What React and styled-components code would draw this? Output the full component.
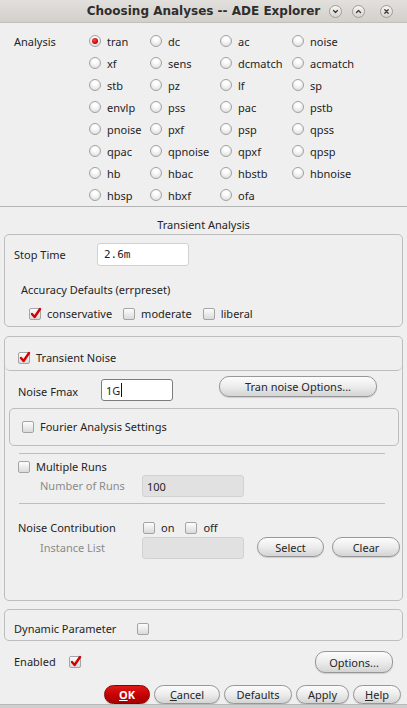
import React from 'react';
import styled, { createGlobalStyle } from 'styled-components';

const Global = createGlobalStyle`
    body {
        margin: 0;
        background: #efefef;
        font-family: "Noto Sans", "Open Sans", sans-serif;
        font-size: 11px;
        color: #242424;
    }
`;

const Window = styled.div`
    width: 407px;
    height: 708px;
    display: flex;
    flex-direction: column;
    background: #efefef;
    overflow: hidden;
`;

const TitleBar = styled.div`
    height: 22px;
    flex: none;
    display: grid;
    grid-template-columns: 1fr auto 1fr;
    align-items: center;
    background: linear-gradient(#e2e0dc, #d3d0cb);
    border-bottom: 1px solid #c2bfba;

    .title {
        grid-column: 2;
        font-family: "DejaVu Sans", sans-serif;
        font-weight: bold;
        font-size: 12px;
        color: #2e2e2e;
    }

    .controls {
        display: flex;
        justify-content: flex-end;
        align-items: center;
        padding-right: 14px;
        gap: 10px;
    }
`;

const TitleButton = styled.span`
    width: 11px;
    height: 11px;
    border-radius: 50%;
    border: 1px solid #a09d98;
    background: linear-gradient(#f7f6f4, #d7d4cf);
    display: flex;
    align-items: center;
    justify-content: center;
    margin-left: ${(p) => (p.$gap ? '5px' : '0')};
`;

const AnalysisGrid = styled.div`
    display: grid;
    grid-template-columns: 75px 61px 70px 72px 1fr;
    grid-auto-rows: 22px;
    padding: 7px 0 0 14px;
    border-bottom: 1px solid #b4b4b4;
    height: 176px;
    flex: none;

    .label {
        grid-row: 1;
        grid-column: 1;
        display: flex;
        align-items: center;
    }
`;

const RadioItem = styled.label`
    display: flex;
    align-items: center;
    gap: 6px;
`;

const Radio = styled.span`
    width: 10px;
    height: 10px;
    border-radius: 50%;
    border: 1px solid #a2a2a2;
    background: radial-gradient(circle at 50% 30%, #ffffff 20%, #dcdcdc 90%);
    display: flex;
    align-items: center;
    justify-content: center;

    &::after {
        content: '';
        display: ${(p) => (p.$on ? 'block' : 'none')};
        width: 6px;
        height: 6px;
        border-radius: 50%;
        background: radial-gradient(circle at 40% 35%, #ff4a4a, #c00000 70%);
    }
`;

const SectionTitle = styled.div`
    text-align: center;
    line-height: 16px;
    padding-top: 10px;
    margin-bottom: 1px;
`;

const GroupBox = styled.div`
    margin: ${(p) => p.$margin || '0 4px'};
    border: 1px solid #bdbdbd;
    border-radius: 5px;
    padding: ${(p) => p.$pad || '0'};
    flex: none;
`;

const Row = styled.div`
    display: flex;
    flex: none;
    align-items: ${(p) => p.$align || 'center'};
    padding-left: ${(p) => p.$left || 0}px;
    margin-top: ${(p) => p.$top || 0}px;
    min-height: ${(p) => p.$h || 16}px;
`;

const Label = styled.span`
    width: ${(p) => (p.$w ? `${p.$w}px` : 'auto')};
    flex: none;
    line-height: 16px;
    color: ${(p) => (p.$muted ? '#8a8a8a' : '#242424')};
    margin-top: ${(p) => p.$top || 0}px;
`;

const TextField = styled.div`
    width: ${(p) => p.$w}px;
    height: ${(p) => p.$h || 22}px;
    box-sizing: border-box;
    border: 1px solid ${(p) => (p.$focus ? '#7c7c7c' : '#d2d2d2')};
    border-radius: 3px;
    background: ${(p) => (p.$disabled ? '#e1e1e1' : '#ffffff')};
    display: flex;
    align-items: center;
    padding-left: ${(p) => (p.$mono ? 6 : 4)}px;
    font-family: ${(p) => (p.$mono ? '"DejaVu Sans Mono", monospace' : 'inherit')};
    font-size: 11px;
    margin-top: ${(p) => p.$top || 0}px;
    flex: none;

    .caret {
        display: inline-block;
        width: 1px;
        height: 14px;
        background: #111;
        margin-left: 1px;
    }
`;

const CheckItem = styled.label`
    display: flex;
    align-items: center;
    gap: 6px;
    margin-right: ${(p) => p.$mr || 0}px;
    line-height: 16px;
`;

const Box = styled.span`
    width: 10px;
    height: 10px;
    flex: none;
    border: 1px solid #a4a4a4;
    border-radius: 2px;
    background: linear-gradient(#fdfdfd, #dadada);
    position: relative;

    svg {
        position: absolute;
        left: 0;
        top: -2px;
    }
`;

const Check = ({ on }) => (
    <Box>
        {on && (
            <svg width="12" height="12" viewBox="0 0 12 12">
                <path d="M2 7 L4.6 10 L10 2" fill="none" stroke="#d20000" strokeWidth="2.4" strokeLinecap="round" strokeLinejoin="round" />
            </svg>
        )}
    </Box>
);

const PillButton = styled.button`
    height: ${(p) => p.$h || 21}px;
    width: ${(p) => p.$w}px;
    flex: none;
    border-radius: 10px;
    border: 1px solid ${(p) => (p.$primary ? '#8a0000' : '#979797')};
    background: ${(p) =>
        p.$primary
            ? 'linear-gradient(#e01818, #c40000 55%, #a60000)'
            : 'linear-gradient(#fcfcfc, #ececec 50%, #d4d4d4)'};
    color: ${(p) => (p.$primary ? '#ffffff' : '#262626')};
    font-family: "Noto Sans", sans-serif;
    font-size: 11px;
    font-weight: ${(p) => (p.$primary ? 'bold' : 'normal')};
    padding: 0;
    margin-top: ${(p) => p.$top || 0}px;
    margin-left: ${(p) => p.$ml || '0'};
    margin-right: ${(p) => p.$mr || '0'};
    box-shadow: 0 1px 1px rgba(0, 0, 0, 0.15);

    u {
        text-decoration: underline;
    }
`;

const Divider = styled.div`
    height: 1px;
    background: #bdbdbd;
    margin: ${(p) => p.$top}px 17px 0 14px;
`;

const NoiseHeader = styled.div`
    border-bottom: 1px solid #bdbdbd;
    border-radius: 0 0 5px 5px;
    padding: 13px 0 4px 13px;
`;

const ButtonBar = styled.div`
    display: flex;
    flex: none;
    justify-content: flex-end;
    gap: 4px;
    padding-right: 6px;
    margin-top: 12px;
`;

const BottomStrip = styled.div`
    margin-top: auto;
    height: 3px;
    flex: none;
    background: #cfcfcf;
    border-top: 1px solid #b9b9b9;
`;

const radios = [
    ['tran', 'dc', 'ac', 'noise'],
    ['xf', 'sens', 'dcmatch', 'acmatch'],
    ['stb', 'pz', 'lf', 'sp'],
    ['envlp', 'pss', 'pac', 'pstb'],
    ['pnoise', 'pxf', 'psp', 'qpss'],
    ['qpac', 'qpnoise', 'qpxf', 'qpsp'],
    ['hb', 'hbac', 'hbstb', 'hbnoise'],
    ['hbsp', 'hbxf', 'ofa'],
];

const Chevron = ({ d }) => (
    <svg width="9" height="9" viewBox="0 0 9 9">
        <path d={d} fill="none" stroke="#3a3a3a" strokeWidth="1.3" strokeLinecap="round" strokeLinejoin="round" />
    </svg>
);

export default function App() {
    return (
        <Window>
            <Global />
            <TitleBar>
                <span className="title">Choosing Analyses -- ADE Explorer</span>
                <div className="controls">
                    <TitleButton><Chevron d="M2.5 3.5 L4.5 5.5 L6.5 3.5" /></TitleButton>
                    <TitleButton><Chevron d="M2.5 5.5 L4.5 3.5 L6.5 5.5" /></TitleButton>
                    <TitleButton $gap><Chevron d="M2.8 2.8 L6.2 6.2 M6.2 2.8 L2.8 6.2" /></TitleButton>
                </div>
            </TitleBar>

            <AnalysisGrid>
                <span className="label">Analysis</span>
                {radios.map((row, r) =>
                    row.map((name, c) => (
                        <RadioItem key={name} style={{ gridRow: r + 1, gridColumn: c + 2 }}>
                            <Radio $on={name === 'tran'} />
                            {name}
                        </RadioItem>
                    ))
                )}
            </AnalysisGrid>

            <SectionTitle>Transient Analysis</SectionTitle>

            <GroupBox $pad="8px 0 4px 0">
                <Row $left={9} $h={23}>
                    <Label $w={83}>Stop Time</Label>
                    <TextField $w={92} $h={23} $mono>2.6m</TextField>
                </Row>
                <Row $left={16} $top={16}>
                    <Label>Accuracy Defaults (errpreset)</Label>
                </Row>
                <Row $left={24} $top={8}>
                    <CheckItem $mr={11}><Check on />conservative</CheckItem>
                    <CheckItem $mr={11}><Check />moderate</CheckItem>
                    <CheckItem><Check />liberal</CheckItem>
                </Row>
            </GroupBox>

            <GroupBox $margin="9px 4px 0 4px" $pad="0 0 41px 0">
                <NoiseHeader>
                    <CheckItem><Check on />Transient Noise</CheckItem>
                </NoiseHeader>
                <Row $left={13} $top={5} $align="flex-start" $h={25}>
                    <Label $w={83} $top={8}>Noise Fmax</Label>
                    <TextField $w={72} $top={3} $focus>1G<span className="caret" /></TextField>
                    <PillButton $w={158} $ml="46px">Tran noise Options...</PillButton>
                </Row>
                <GroupBox $margin="7px 3px 0 4px" $pad="10px 0 10px 12px">
                    <CheckItem><Check />Fourier Analysis Settings</CheckItem>
                </GroupBox>
                <Divider $top={7} />
                <Row $left={13} $top={5}>
                    <CheckItem><Check />Multiple Runs</CheckItem>
                </Row>
                <Row $left={35} $h={22}>
                    <Label $w={102} $muted>Number of Runs</Label>
                    <TextField $w={102} $disabled>100</TextField>
                </Row>
                <Divider $top={6} />
                <Row $left={13} $top={16}>
                    <Label $w={125}>Noise Contribution</Label>
                    <CheckItem $mr={11}><Check />on</CheckItem>
                    <CheckItem><Check />off</CheckItem>
                </Row>
                <Row $left={35} $top={1} $h={22} $align="flex-start">
                    <Label $w={102} $muted $top={3}>Instance List</Label>
                    <TextField $w={102} $disabled />
                    <PillButton $w={67} $h={20} $ml="13px">Select</PillButton>
                    <PillButton $w={68} $h={20} $ml="8px">Clear</PillButton>
                </Row>
            </GroupBox>

            <GroupBox $margin="8px 4px 0 4px" $pad="11px 0 3px 9px">
                <Row>
                    <Label $w={123}>Dynamic Parameter</Label>
                    <Check />
                </Row>
            </GroupBox>

            <Row $left={14} $top={10} $h={22}>
                <Label $w={55}>Enabled</Label>
                <Check on />
                <PillButton $w={78} $h={22} $ml="auto" $mr="14px">Options...</PillButton>
            </Row>

            <ButtonBar>
                <PillButton $w={46} $h={19} $primary><u>O</u>K</PillButton>
                <PillButton $w={66} $h={19}><u>C</u>ancel</PillButton>
                <PillButton $w={68} $h={19}>Defaults</PillButton>
                <PillButton $w={53} $h={19}>Apply</PillButton>
                <PillButton $w={48} $h={19}><u>H</u>elp</PillButton>
            </ButtonBar>
            <BottomStrip />
        </Window>
    );
}
